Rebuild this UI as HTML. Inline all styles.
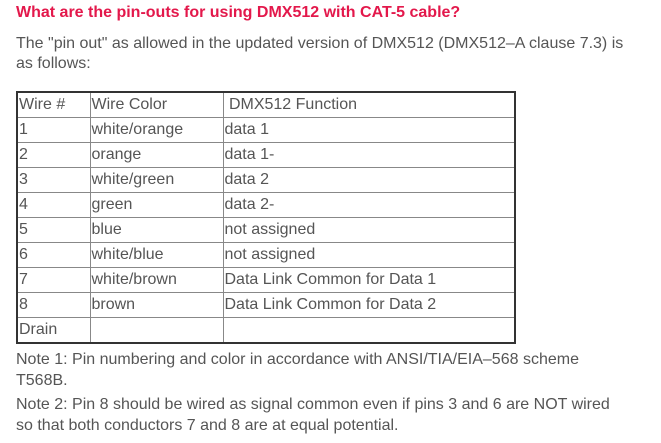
<!DOCTYPE html>
<html><head><meta charset="utf-8"><style>
body{margin:0;width:661px;height:443px;background:#fff;font-family:"Liberation Sans","DejaVu Sans",sans-serif;color:#555;position:relative;overflow:hidden}
.l{position:absolute;left:16px;white-space:nowrap;font-size:16px;line-height:20px}
h1{position:absolute;left:16px;top:3px;margin:0;font-size:16px;line-height:20px;color:#e3184b;white-space:nowrap;font-weight:bold}
table{position:absolute;left:16px;top:91px;width:500px;border-collapse:collapse;border:2px solid #333;font-size:16px;color:#555}
td{border:1px solid #888;height:24px;padding:0 0 0 1px;line-height:24px;white-space:nowrap;box-sizing:content-box}
</style></head><body>
<h1>What are the pin-outs for using DMX512 with CAT-5 cable?</h1>
<div class="l" style="top:34px">The "pin out" as allowed in the updated version of DMX512 (DMX512–A clause 7.3) is</div>
<div class="l" style="top:54px">as follows:</div>
<table>
<colgroup><col style="width:73px"><col style="width:133px"><col></colgroup>
<tr><td>Wire #</td><td>Wire Color</td><td>&nbsp;DMX512 Function</td></tr>
<tr><td>1</td><td>white/orange</td><td>data 1</td></tr>
<tr><td>2</td><td>orange</td><td>data 1-</td></tr>
<tr><td>3</td><td>white/green</td><td>data 2</td></tr>
<tr><td>4</td><td>green</td><td>data 2-</td></tr>
<tr><td>5</td><td>blue</td><td>not assigned</td></tr>
<tr><td>6</td><td>white/blue</td><td>not assigned</td></tr>
<tr><td>7</td><td>white/brown</td><td>Data Link Common for Data 1</td></tr>
<tr><td>8</td><td>brown</td><td>Data Link Common for Data 2</td></tr>
<tr><td>Drain</td><td></td><td></td></tr>
</table>
<div class="l" style="top:350px">Note 1: Pin numbering and color in accordance with ANSI/TIA/EIA–568 scheme</div>
<div class="l" style="top:371px">T568B.</div>
<div class="l" style="top:395px">Note 2: Pin 8 should be wired as signal common even if pins 3 and 6 are NOT wired</div>
<div class="l" style="top:416px">so that both conductors 7 and 8 are at equal potential.</div>
</body></html>
